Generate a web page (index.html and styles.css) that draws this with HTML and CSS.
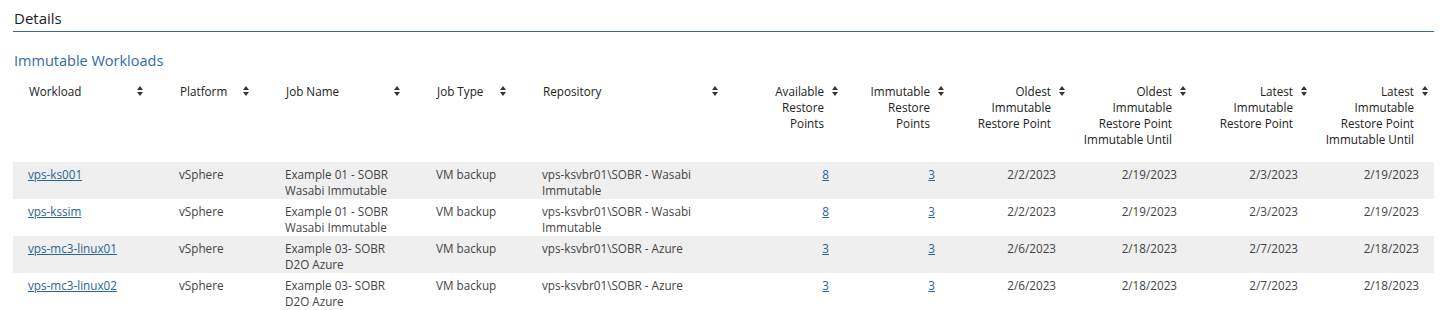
FILE: index.html
```html
<!DOCTYPE html>
<html lang="en">
<head>
  <meta charset="UTF-8">
  <meta name="viewport" content="width=device-width, initial-scale=1.0">
  <title>Immutable Workloads</title>
  <link rel="stylesheet" href="styles.css">
</head>
<body>
  <div class="page">
    <h2 class="section-title">Details</h2>
    <h3 class="table-title">Immutable Workloads</h3>

    <table class="grid">
      <colgroup>
        <col style="width: 151px">
        <col style="width: 106px">
        <col style="width: 151px">
        <col style="width: 106px">
        <col style="width: 212px">
        <col style="width: 105px">
        <col style="width: 106px">
        <col style="width: 121px">
        <col style="width: 121px">
        <col style="width: 121px">
        <col style="width: 121px">
      </colgroup>
      <thead>
        <tr>
          <th><div class="th-in"><span>Workload</span><svg class="sort" viewBox="0 0 6 10"><polygon points="0,4 3,0 6,4"/><polygon points="0,6 3,10 6,6"/></svg></div></th>
          <th><div class="th-in"><span>Platform</span><svg class="sort" viewBox="0 0 6 10"><polygon points="0,4 3,0 6,4"/><polygon points="0,6 3,10 6,6"/></svg></div></th>
          <th><div class="th-in"><span>Job Name</span><svg class="sort" viewBox="0 0 6 10"><polygon points="0,4 3,0 6,4"/><polygon points="0,6 3,10 6,6"/></svg></div></th>
          <th><div class="th-in"><span>Job Type</span><svg class="sort" viewBox="0 0 6 10"><polygon points="0,4 3,0 6,4"/><polygon points="0,6 3,10 6,6"/></svg></div></th>
          <th><div class="th-in"><span>Repository</span><svg class="sort" viewBox="0 0 6 10"><polygon points="0,4 3,0 6,4"/><polygon points="0,6 3,10 6,6"/></svg></div></th>
          <th class="num"><div class="th-in"><span>Available<br>Restore<br>Points</span><svg class="sort" viewBox="0 0 6 10"><polygon points="0,4 3,0 6,4"/><polygon points="0,6 3,10 6,6"/></svg></div></th>
          <th class="num"><div class="th-in"><span>Immutable<br>Restore<br>Points</span><svg class="sort" viewBox="0 0 6 10"><polygon points="0,4 3,0 6,4"/><polygon points="0,6 3,10 6,6"/></svg></div></th>
          <th class="num"><div class="th-in"><span>Oldest<br>Immutable<br>Restore Point</span><svg class="sort" viewBox="0 0 6 10"><polygon points="0,4 3,0 6,4"/><polygon points="0,6 3,10 6,6"/></svg></div></th>
          <th class="num"><div class="th-in"><span>Oldest<br>Immutable<br>Restore Point<br>Immutable Until</span><svg class="sort" viewBox="0 0 6 10"><polygon points="0,4 3,0 6,4"/><polygon points="0,6 3,10 6,6"/></svg></div></th>
          <th class="num"><div class="th-in"><span>Latest<br>Immutable<br>Restore Point</span><svg class="sort" viewBox="0 0 6 10"><polygon points="0,4 3,0 6,4"/><polygon points="0,6 3,10 6,6"/></svg></div></th>
          <th class="num"><div class="th-in"><span>Latest<br>Immutable<br>Restore Point<br>Immutable Until</span><svg class="sort" viewBox="0 0 6 10"><polygon points="0,4 3,0 6,4"/><polygon points="0,6 3,10 6,6"/></svg></div></th>
        </tr>
      </thead>
      <tbody>
        <tr>
          <td><a href="#">vps-ks001</a></td>
          <td>vSphere</td>
          <td>Example 01 - SOBR Wasabi Immutable</td>
          <td>VM backup</td>
          <td>vps-ksvbr01\SOBR - Wasabi Immutable</td>
          <td class="num"><a href="#">8</a></td>
          <td class="num"><a href="#">3</a></td>
          <td class="num">2/2/2023</td>
          <td class="num">2/19/2023</td>
          <td class="num">2/3/2023</td>
          <td class="num">2/19/2023</td>
        </tr>
        <tr>
          <td><a href="#">vps-kssim</a></td>
          <td>vSphere</td>
          <td>Example 01 - SOBR Wasabi Immutable</td>
          <td>VM backup</td>
          <td>vps-ksvbr01\SOBR - Wasabi Immutable</td>
          <td class="num"><a href="#">8</a></td>
          <td class="num"><a href="#">3</a></td>
          <td class="num">2/2/2023</td>
          <td class="num">2/19/2023</td>
          <td class="num">2/3/2023</td>
          <td class="num">2/19/2023</td>
        </tr>
        <tr>
          <td><a href="#">vps-mc3-linux01</a></td>
          <td>vSphere</td>
          <td>Example 03- SOBR D2O Azure</td>
          <td>VM backup</td>
          <td>vps-ksvbr01\SOBR - Azure</td>
          <td class="num"><a href="#">3</a></td>
          <td class="num"><a href="#">3</a></td>
          <td class="num">2/6/2023</td>
          <td class="num">2/18/2023</td>
          <td class="num">2/7/2023</td>
          <td class="num">2/18/2023</td>
        </tr>
        <tr>
          <td><a href="#">vps-mc3-linux02</a></td>
          <td>vSphere</td>
          <td>Example 03- SOBR D2O Azure</td>
          <td>VM backup</td>
          <td>vps-ksvbr01\SOBR - Azure</td>
          <td class="num"><a href="#">3</a></td>
          <td class="num"><a href="#">3</a></td>
          <td class="num">2/6/2023</td>
          <td class="num">2/18/2023</td>
          <td class="num">2/7/2023</td>
          <td class="num">2/18/2023</td>
        </tr>
      </tbody>
    </table>
  </div>
</body>
</html>
```

FILE: styles.css
```css
body {
  margin: 0;
  font-family: 'Open Sans', 'Noto Sans', sans-serif;
  font-size: 11.7px;
  color: #444;
  background: #fff;
}

.page {
  padding: 0 15px 0 13px;
}

.section-title {
  margin: 8px 0 0;
  padding: 0 0 3px 1px;
  font-size: 15px;
  font-weight: normal;
  line-height: 20px;
  color: #222;
  border-bottom: 1px solid #3a6995;
}

.table-title {
  margin: 19px 0 0;
  padding-left: 1px;
  font-size: 14.5px;
  font-weight: normal;
  line-height: 20px;
  color: #2f6ca3;
}

.grid {
  width: 1421px;
  table-layout: fixed;
  border-collapse: collapse;
}

.grid th {
  padding: 12px 21px 15px 16px;
  font-weight: normal;
  color: #222;
  line-height: 16px;
  text-align: left;
  vertical-align: top;
  white-space: nowrap;
}

.grid th.num {
  padding-right: 6px;
  text-align: right;
}

.th-in {
  display: flex;
  justify-content: space-between;
  align-items: flex-start;
}

.num .th-in {
  justify-content: flex-end;
  gap: 8px;
}

.sort {
  flex: none;
  width: 6px;
  height: 10px;
  margin-top: 3px;
  fill: #333;
}

.grid td {
  padding: 4px 15px 1px 15px;
  line-height: 16px;
  height: 32px;
  vertical-align: top;
}

.grid td.num {
  text-align: right;
}

.grid tbody tr:nth-child(odd) {
  background: #efefef;
}

.grid a {
  color: #2a6496;
  text-decoration: underline;
}
```
